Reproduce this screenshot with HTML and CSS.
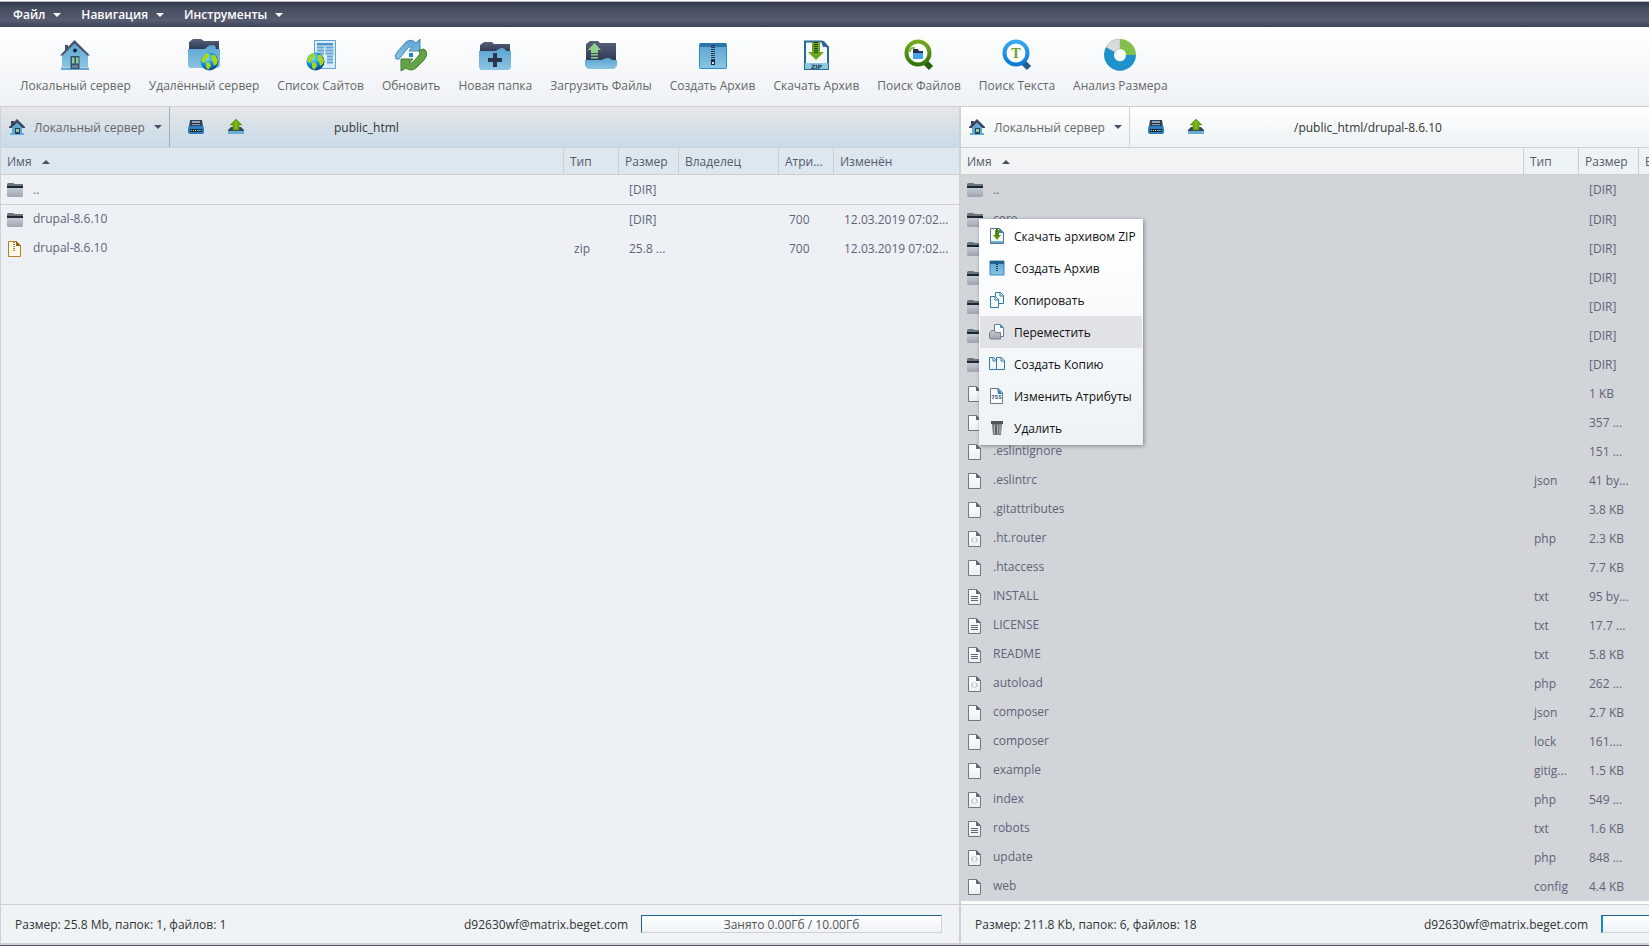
FILE: index.html
```
<!DOCTYPE html>
<html lang="ru">
  <head>
    <meta charset="UTF-8" />
    <meta name="viewport" content="width=device-width, initial-scale=1.0" />
    <title>Файловый менеджер</title>
    <link rel="stylesheet" href="styles.css">
  </head>
  <body>
    <svg class="sprite" aria-hidden="true">
      <defs>
        <linearGradient id="blue" x1="0" y1="0" x2="0" y2="1"><stop offset="0" stop-color="#5aa3d2" /><stop offset="1" stop-color="#8cc5e2" /></linearGradient>
        <linearGradient id="dark" x1="0" y1="0" x2="0" y2="1"><stop offset="0" stop-color="#59617a" /><stop offset="1" stop-color="#2b3650" /></linearGradient>
        <linearGradient id="grey" x1="0" y1="0" x2="0" y2="1"><stop offset="0" stop-color="#c6cad3" /><stop offset="1" stop-color="#9ea5b1" /></linearGradient>
        <linearGradient id="page" x1="0" y1="0" x2="0" y2="1"><stop offset="0" stop-color="#ffffff" /><stop offset="1" stop-color="#eceef2" /></linearGradient>
        <linearGradient id="green" x1="0" y1="0" x2="0" y2="1"><stop offset="0" stop-color="#77a81f" /><stop offset="1" stop-color="#337507" /></linearGradient>
        <linearGradient id="lens" x1="0" y1="0" x2="0" y2="1"><stop offset="0" stop-color="#36a9ef" /><stop offset="1" stop-color="#0b7bd6" /></linearGradient>
        <radialGradient id="sea" cx="0.35" cy="0.3" r="0.8"><stop offset="0" stop-color="#8be6ff" /><stop offset="0.45" stop-color="#1598e6" /><stop offset="1" stop-color="#04327e" /></radialGradient>
      </defs>

      <symbol id="globe" viewBox="0 0 19 19">
        <circle cx="9.500" cy="9.500" r="9" fill="url(#sea)" />
        <path d="M2 6q2-4 6-5l2 2-2 1 1 2-3 1-1 3-2 1-2-2zM6 10l4 1 1 3-3 4-2-3zM12 3l3 0 3 5-1 4-3 2-1-4-2-2 1-2-1-2z" fill="#a6d61a" />
      </symbol>
      <symbol id="house" viewBox="0 0 32 32">
        <path d="M6 6h3v7H6z" fill="#465069" />
        <path d="M16 3 29 16v12H3V16z" fill="url(#blue)" />
        <path d="M15.500 1 31 16.500H28.500L15.500 4.500 3.500 16.500H1z" fill="#465069" />
        <path d="M2 28.500h28V31H2z" fill="#64a8d2" />
        <circle cx="16" cy="11.500" r="2" fill="#17213a" />
        <path d="M11.500 17h9v13h-9z" fill="#35526e" />
        <path d="M13 18.500h2.500v6H13zM17 18.500h2.500v6H17z" fill="#8bce8d" />
        <path d="M13 26h6v3h-6z" fill="#6b8298" />
      </symbol>
      <symbol id="house-sm" viewBox="0 0 16 16">
        <path d="M2 2h3v5H2zM8 0l8 8v1h-3L8 4 3 9H0V8z" fill="#3d465e" />
        <path d="M8 4l5 5v6H3V9z" fill="#58a9d4" />
        <path d="M1 14h14v2H1z" fill="#66acd4" />
        <path d="M6 9h5v6H6z" fill="#21455e" /><path d="M7 10h3v3H7z" fill="#9ecd9b" />
      </symbol>
      <symbol id="remote" viewBox="0 0 32 32">
        <path d="M1 10V3l4-3h8l3 2h15v9z" fill="url(#dark)" />
        <path d="M0 10h17q3-4 7-4t4 4h4v17l-2 2H2l-2-2z" fill="url(#blue)" />
        <use href="#globe" x="12" y="13" width="19" height="19" />
      </symbol>
      <symbol id="sites" viewBox="0 0 32 32">
        <path d="M9.500 1.500h21v28h-21z" fill="#d9edf8" stroke="#62a4cf" />
        <path d="M12 4h16v2.500H12z" fill="#4c96c8" />
        <path d="M12 8.500h7M12 11.500h7M12 14.500h7M20.500 8.500h8M20.500 11.500h8M20.500 14.500h8M22 17.500h6M22 20.500h6M22 23.500h6" stroke="#62a4cf" stroke-width="2" />
        <use href="#globe" x="1" y="13" width="19" height="19" />
      </symbol>
      <symbol id="refresh" viewBox="0 0 32 32">
        <path d="M1 20Q-1 16 3 12L11 3Q16-1 21 4l4-4v12H14l3-4q-3-1-5 2L4 20z" fill="url(#blue)" stroke="#4389b8" />
        <path d="M29 10l2 2q2 5-2 9l-8 8q-5 4-10 0l-5 3V20h12l-4 4q2 1 5-2l6-7-1-4z" fill="#63a348" stroke="#417e31" />
        <path d="M14 14h4v4h-4z" fill="#1584c9" />
      </symbol>
      <symbol id="new-folder" viewBox="0 0 32 32">
        <path d="M1 12V6l4-3h8l2 2h16v8z" fill="url(#dark)" />
        <path d="M0 12h17q3-3 6-3t4 3h5v17l-2 2H2l-2-2z" fill="url(#blue)" />
        <path d="M14 14h4v5h5v4h-5v5h-4v-5H9v-4h5z" fill="#2a344b" />
      </symbol>
      <symbol id="upload" viewBox="0 0 32 32">
        <path d="M1 24V5l4-3h8l2 2h16v20z" fill="url(#dark)" />
        <path d="M0 21h17q3-2 6-2t4 2h5v6l-3 3H3l-3-3z" fill="url(#blue)" />
        <path d="M9.500 4 16 11h-3v3H6v-3H3zM6 15h7v1.500H6zM6 18h7v1.500H6z" fill="#8fd08a" />
      </symbol>
      <symbol id="archive" viewBox="0 0 32 32">
        <rect x="2.500" y="4.500" width="27" height="25" rx="1" fill="url(#blue)" stroke="#2b8cc4" />
        <path d="M3 4h26v4H3z" fill="#2a74aa" />
        <path d="M16 6v17" stroke="#27394e" stroke-width="4" stroke-dasharray="1 1" />
        <path d="M14 21h4v5h-4z" fill="#1d2b3d" /><path d="M15 23h2v2h-2z" fill="#d4e6f0" />
      </symbol>
      <symbol id="zip-down" viewBox="0 0 32 32">
        <path d="M5 2.500h17l6 6V30H5z" fill="#f3f8fc" stroke="#2d6b96" stroke-width="2" />
        <path d="M21 2h3l5 6h-6z" fill="#2d6b96" />
        <path d="M5 24h23v6H5z" fill="#8dc6e2" />
        <path d="M12 3h8v10h4l-8 8-8-8h4z" fill="#6fa51a" />
        <path d="M16 3v11" stroke="#284316" stroke-width="4" stroke-dasharray="1 1" />
        <text x="16.500" y="30" text-anchor="middle" class="ic-zip">ZIP</text>
      </symbol>
      <symbol id="find-file" viewBox="0 0 32 32">
        <path d="M21 22l7 7" stroke="#2c6109" stroke-width="6" />
        <circle cx="15" cy="14" r="11.500" fill="#fff" stroke="url(#green)" stroke-width="4" />
        <path d="M10 10h5l1 2h4v3H10z" fill="#26314b" /><path d="M10 14h10v6H10z" fill="#42a5ea" />
        <path d="M7 13q0-5 5-4" fill="none" stroke="#8cb84a" stroke-width="2" />
      </symbol>
      <symbol id="find-text" viewBox="0 0 32 32">
        <path d="M21 22l7 7" stroke="#235d8c" stroke-width="6" />
        <circle cx="15" cy="14" r="11.500" fill="#fff" stroke="url(#lens)" stroke-width="4" />
        <text x="15" y="19" text-anchor="middle" class="ic-t">T</text>
      </symbol>
      <symbol id="sizes" viewBox="0 0 32 32">
        <path d="M16 0a16 16 0 0 1 16 16H22a6 6 0 0 0-6-6z" fill="#83c04b" />
        <path d="M32 16A16 16 0 1 1 2 8l9 5a6 6 0 1 0 11 3z" fill="#1e93cb" />
        <path d="M2 8Q6 0 16 0v10q-4 0-5 3z" fill="#d9dbde" stroke="#9ca4aa" stroke-width="0.500" />
      </symbol>
      <symbol id="drive" viewBox="0 0 16 16">
        <path d="M2 1h12l1 7H1z" fill="#2b4058" /><path d="M4 2h8v4H4z" fill="#8fa5b5" /><path d="M4 4h8v1H4z" fill="#1c2a3b" />
        <rect y="7" width="16" height="8" rx="2" fill="#2b7dbd" /><path d="M2 10h12v3H2z" fill="#16273b" />
        <path d="M3 11h1v1H3zM5 11h1v1H5zM7 11h1v1H7z" fill="#e9e05a" /><path d="M9 11h4v1H9z" fill="#59b4e5" />
      </symbol>
      <symbol id="up" viewBox="0 0 16 16">
        <path d="M0 11l3-3h10l3 3v1H0z" fill="#36475c" /><path d="M0 12h16v3H0z" fill="#65aed6" />
        <path d="M8 0l6 6h-3v5H5V6H2z" fill="#6aa80b" stroke="#4e850c" stroke-width="0.500" /><path d="M8 2v8" stroke="#a0ce33" />
      </symbol>
      <symbol id="folder" viewBox="0 0 16 16">
        <path d="M0 5V2l1-1h5l2 1h8v3z" fill="#6b757d" />
        <path d="M0 4h16v2H0z" fill="#1b2635" /><path d="M0 6h16v8l-1 1H1l-1-1z" fill="url(#grey)" />
      </symbol>
      <symbol id="file" viewBox="0 0 16 16">
        <path d="M1.500 0.500h8l4 4v11h-12z" fill="url(#page)" stroke="#6d7984" /><path d="M9 0l5 5H9z" fill="#5f6b76" />
      </symbol>
      <symbol id="code" viewBox="0 0 16 16">
        <use href="#file" /><path d="M6.500 6.500 4.500 9l2 2.500M8.500 6.500l2 2.500-2 2.500" fill="none" stroke="#a3abb9" />
      </symbol>
      <symbol id="text" viewBox="0 0 16 16">
        <use href="#file" /><path d="M4 7.500h7M4 9.500h7M4 11.500h7" stroke="#5f6873" />
      </symbol>
      <symbol id="zip" viewBox="0 0 16 16">
        <path d="M1.500 0.500h8l4 4v11h-12z" fill="#fdf8ec" stroke="#b9811c" /><path d="M9 0l5 5H9z" fill="#9a6508" />
        <path d="M7 1v10" stroke="#b9811c" stroke-width="2" stroke-dasharray="1 1" />
      </symbol>
      <symbol id="menu-zip" viewBox="0 0 16 16">
        <path d="M1.500 0.500h9l4 4v11h-13z" fill="#f7fafc" stroke="#5d7083" /><path d="M10 0l5 5h-5z" fill="#3b84b3" />
        <path d="M2 13h12v2H2z" fill="#6db1d7" /><path d="M6 2h4v5h2l-4 5-4-5h2z" fill="#65970d" /><path d="M8 1v7" stroke="#345e15" stroke-width="2" stroke-dasharray="1 1" />
      </symbol>
      <symbol id="menu-archive" viewBox="0 0 16 16">
        <path d="M1 1h14v14H1z" fill="url(#blue)" stroke="#3688b9" /><path d="M1 1h14v3H1z" fill="#21658f" />
        <path d="M8 2v10" stroke="#243d54" stroke-width="2" stroke-dasharray="1 1" />
      </symbol>
      <symbol id="menu-copy" viewBox="0 0 16 16">
        <path d="M6.500 0.500h5l3 3v8h-8z" fill="#f1f8fc" stroke="#347ba5" /><path d="M1.500 4.500h5l3 3v8h-8z" fill="#f5fafd" stroke="#347ba5" />
        <path d="M11 0v4h4M6 4v4h4" fill="none" stroke="#347ba5" />
      </symbol>
      <symbol id="menu-move" viewBox="0 0 16 16">
        <path d="M5.500 0.500h6l3 3v9h-9z" fill="#fafbfd" stroke="#6d7984" /><path d="M11 0l4 4h-4z" fill="#3b98d3" />
        <path d="M0.500 14V9l2-2.500h3l1 2h5V15h-10z" fill="url(#grey)" stroke="#777f8b" />
      </symbol>
      <symbol id="menu-clone" viewBox="0 0 16 16">
        <path d="M0.500 1.500h4l3 3v9h-7zM7.500 1.500h5l3 3v9h-8z" fill="#f1f8fc" stroke="#347ba5" /><path d="M4 2v3h3M12 2v3h3" fill="none" stroke="#347ba5" />
      </symbol>
      <symbol id="menu-attr" viewBox="0 0 16 16">
        <path d="M1.500 0.500h8l4 4v11h-12z" fill="#fbfcfe" stroke="#6d7984" /><path d="M8 0l6 6H9z" fill="#3384b3" />
        <text x="7.500" y="11" text-anchor="middle" class="ic-attr">755</text>
      </symbol>
      <symbol id="menu-trash" viewBox="0 0 16 16">
        <path d="M3 4h10l-1 11H4z" fill="#777a7e" /><path d="M2 1h12v3H2z" fill="#50555b" />
        <path d="M5.500 5v9M8.500 5v9M11 5v9" stroke="#b2b4b7" /><path d="M7 5v9" stroke="#3e4247" />
      </symbol>
    </svg>

    <nav class="menubar">
      <button>Файл <i class="caret"></i></button>
      <button>Навигация <i class="caret"></i></button>
      <button>Инструменты <i class="caret"></i></button>
    </nav>

    <header class="toolbar">
      <button><svg><use href="#house" /></svg>Локальный сервер</button>
      <button><svg><use href="#remote" /></svg>Удалённый сервер</button>
      <button><svg><use href="#sites" /></svg>Список Сайтов</button>
      <button><svg><use href="#refresh" /></svg>Обновить</button>
      <button><svg><use href="#new-folder" /></svg>Новая папка</button>
      <button><svg><use href="#upload" /></svg>Загрузить Файлы</button>
      <button><svg><use href="#archive" /></svg>Создать Архив</button>
      <button><svg><use href="#zip-down" /></svg>Скачать Архив</button>
      <button><svg><use href="#find-file" /></svg>Поиск Файлов</button>
      <button><svg><use href="#find-text" /></svg>Поиск Текста</button>
      <button><svg><use href="#sizes" /></svg>Анализ Размера</button>
    </header>

    <main>
      <section class="pane active">
        <div class="pane-bar">
          <button class="server"><svg class="ic"><use href="#house-sm" /></svg>Локальный сервер <i class="caret"></i></button>
          <button class="tool" aria-label="Диск"><svg class="ic"><use href="#drive" /></svg></button>
          <button class="tool" aria-label="Вверх"><svg class="ic"><use href="#up" /></svg></button>
          <span class="path">public_html</span>
        </div>
        <div class="list">
          <table>
            <colgroup><col><col class="c-type"><col class="c-size"><col class="c-owner"><col class="c-attr"><col class="c-date"></colgroup>
            <thead>
              <tr><th>Имя <i class="caret asc"></i></th><th>Тип</th><th>Размер</th><th>Владелец</th><th>Атри...</th><th>Изменён</th></tr>
            </thead>
            <tbody>
              <tr class="parent"><td><svg class="ic"><use href="#folder" /></svg>..</td><td></td><td>[DIR]</td><td></td><td></td><td></td></tr>
              <tr><td><svg class="ic"><use href="#folder" /></svg>drupal-8.6.10</td><td></td><td>[DIR]</td><td></td><td>700</td><td>12.03.2019 07:02...</td></tr>
              <tr><td><svg class="ic"><use href="#zip" /></svg>drupal-8.6.10</td><td>zip</td><td>25.8 ...</td><td></td><td>700</td><td>12.03.2019 07:02...</td></tr>
            </tbody>
          </table>
        </div>
        <footer>
          <span>Размер: 25.8 Mb, папок: 1, файлов: 1</span>
          <span class="account">d92630wf@matrix.beget.com</span>
          <div class="quota">Занято 0.00Гб / 10.00Гб</div>
        </footer>
      </section>

      <section class="pane">
        <div class="pane-bar">
          <button class="server"><svg class="ic"><use href="#house-sm" /></svg>Локальный сервер <i class="caret"></i></button>
          <button class="tool" aria-label="Диск"><svg class="ic"><use href="#drive" /></svg></button>
          <button class="tool" aria-label="Вверх"><svg class="ic"><use href="#up" /></svg></button>
          <span class="path">/public_html/drupal-8.6.10</span>
        </div>
        <div class="list">
          <table class="selected">
            <colgroup><col><col class="c-type"><col class="c-size"><col class="c-owner"><col class="c-attr"><col class="c-date"></colgroup>
            <thead>
              <tr><th>Имя <i class="caret asc"></i></th><th>Тип</th><th>Размер</th><th>Владелец</th><th>Атри...</th><th>Изменён</th></tr>
            </thead>
            <tbody>
              <tr><td><svg class="ic"><use href="#folder" /></svg>..</td><td></td><td>[DIR]</td><td colspan="3"></td></tr>
              <tr><td><svg class="ic"><use href="#folder" /></svg>core</td><td></td><td>[DIR]</td><td colspan="3"></td></tr>
              <tr><td><svg class="ic"><use href="#folder" /></svg>modules</td><td></td><td>[DIR]</td><td colspan="3"></td></tr>
              <tr><td><svg class="ic"><use href="#folder" /></svg>profiles</td><td></td><td>[DIR]</td><td colspan="3"></td></tr>
              <tr><td><svg class="ic"><use href="#folder" /></svg>sites</td><td></td><td>[DIR]</td><td colspan="3"></td></tr>
              <tr><td><svg class="ic"><use href="#folder" /></svg>themes</td><td></td><td>[DIR]</td><td colspan="3"></td></tr>
              <tr><td><svg class="ic"><use href="#folder" /></svg>vendor</td><td></td><td>[DIR]</td><td colspan="3"></td></tr>
              <tr><td><svg class="ic"><use href="#file" /></svg>.csslintrc</td><td></td><td>1 KB</td><td colspan="3"></td></tr>
              <tr><td><svg class="ic"><use href="#file" /></svg>.editorconfig</td><td></td><td>357 ...</td><td colspan="3"></td></tr>
              <tr><td><svg class="ic"><use href="#file" /></svg>.eslintignore</td><td></td><td>151 ...</td><td colspan="3"></td></tr>
              <tr><td><svg class="ic"><use href="#file" /></svg>.eslintrc</td><td>json</td><td>41 by...</td><td colspan="3"></td></tr>
              <tr><td><svg class="ic"><use href="#file" /></svg>.gitattributes</td><td></td><td>3.8 KB</td><td colspan="3"></td></tr>
              <tr><td><svg class="ic"><use href="#code" /></svg>.ht.router</td><td>php</td><td>2.3 KB</td><td colspan="3"></td></tr>
              <tr><td><svg class="ic"><use href="#file" /></svg>.htaccess</td><td></td><td>7.7 KB</td><td colspan="3"></td></tr>
              <tr><td><svg class="ic"><use href="#text" /></svg>INSTALL</td><td>txt</td><td>95 by...</td><td colspan="3"></td></tr>
              <tr><td><svg class="ic"><use href="#text" /></svg>LICENSE</td><td>txt</td><td>17.7 ...</td><td colspan="3"></td></tr>
              <tr><td><svg class="ic"><use href="#text" /></svg>README</td><td>txt</td><td>5.8 KB</td><td colspan="3"></td></tr>
              <tr><td><svg class="ic"><use href="#code" /></svg>autoload</td><td>php</td><td>262 ...</td><td colspan="3"></td></tr>
              <tr><td><svg class="ic"><use href="#file" /></svg>composer</td><td>json</td><td>2.7 KB</td><td colspan="3"></td></tr>
              <tr><td><svg class="ic"><use href="#file" /></svg>composer</td><td>lock</td><td>161....</td><td colspan="3"></td></tr>
              <tr><td><svg class="ic"><use href="#file" /></svg>example</td><td>gitig...</td><td>1.5 KB</td><td colspan="3"></td></tr>
              <tr><td><svg class="ic"><use href="#code" /></svg>index</td><td>php</td><td>549 ...</td><td colspan="3"></td></tr>
              <tr><td><svg class="ic"><use href="#text" /></svg>robots</td><td>txt</td><td>1.6 KB</td><td colspan="3"></td></tr>
              <tr><td><svg class="ic"><use href="#code" /></svg>update</td><td>php</td><td>848 ...</td><td colspan="3"></td></tr>
              <tr><td><svg class="ic"><use href="#file" /></svg>web</td><td>config</td><td>4.4 KB</td><td colspan="3"></td></tr>
            </tbody>
          </table>
        </div>
        <footer>
          <span>Размер: 211.8 Kb, папок: 6, файлов: 18</span>
          <span class="account">d92630wf@matrix.beget.com</span>
          <div class="quota used"></div>
        </footer>

        <div class="context-menu">
          <button><svg class="ic"><use href="#menu-zip" /></svg>Скачать архивом ZIP</button>
          <button><svg class="ic"><use href="#menu-archive" /></svg>Создать Архив</button>
          <button><svg class="ic"><use href="#menu-copy" /></svg>Копировать</button>
          <button class="current"><svg class="ic"><use href="#menu-move" /></svg>Переместить</button>
          <button><svg class="ic"><use href="#menu-clone" /></svg>Создать Копию</button>
          <button><svg class="ic"><use href="#menu-attr" /></svg>Изменить Атрибуты</button>
          <button><svg class="ic"><use href="#menu-trash" /></svg>Удалить</button>
        </div>
      </section>
    </main>
  </body>
</html>
```
FILE: styles.css
```
* {
  margin: 0;
  padding: 0;
  box-sizing: border-box;
}

body {
  display: flex;
  flex-direction: column;
  height: 100vh;
  overflow: hidden;
  font-family: "Open Sans", sans-serif;
  font-size: 12px;
  color: #333;
  background-color: #eff3f6;
  border-top: 1px solid #fff;
  border-bottom: 1px solid #50566b;
}

button {
  font: inherit;
  color: inherit;
  background: none;
  border: none;
  cursor: pointer;
  white-space: nowrap;
}

.sprite {
  position: absolute;
  width: 0;
  height: 0;
}

.ic {
  flex: none;
  width: 16px;
  height: 16px;
}

.ic-zip {
  font: bold 6px "DejaVu Sans", sans-serif;
  fill: #1d3c52;
}
.ic-t {
  font: bold 14px "Liberation Serif", serif;
  fill: #6a9f1d;
}
.ic-attr {
  font: bold 5px "DejaVu Sans", sans-serif;
  fill: #2a5475;
}

.caret {
  display: inline-block;
  border: 4px solid transparent;
  border-top-color: currentColor;
  border-bottom: none;
}
.caret.asc {
  border-top: none;
  border-bottom: 4px solid #4a5166;
}

/* Главное меню */
.menubar {
  display: flex;
  flex: none;
  height: 26px;
  padding-left: 3px;
  border-top: 1px solid #b5b7bc;
  color: #fff;
  background: linear-gradient(#34394a, #474d61 25%, #555b70 75%, #3d4254);
}
.menubar button {
  display: flex;
  align-items: center;
  gap: 8px;
  padding: 0 10px;
  line-height: 24px;
  font-weight: 600;
}

/* Панель инструментов */
.toolbar {
  display: flex;
  flex: none;
  height: 79px;
  padding-left: 11px;
  background: linear-gradient(#fff, #eef2f5);
}
.toolbar button {
  display: flex;
  flex-direction: column;
  align-items: center;
  gap: 6px;
  padding: 12px 9px 0;
  line-height: 18px;
  color: #666;
}
.toolbar svg {
  width: 32px;
  height: 32px;
}

main {
  display: flex;
  flex: 1;
  min-height: 0;
}

.pane {
  position: relative;
  display: flex;
  flex: 1 0 960px;
  flex-direction: column;
  min-width: 0;
  border: 1px solid #cfd1d3;
  border-bottom-width: 2px;
}

.pane-bar {
  display: flex;
  flex: none;
  align-items: center;
  height: 41px;
  border-bottom: 1px solid #cfd1d3;
  background: linear-gradient(#fff, #edf2f4);
}
.active .pane-bar {
  background: linear-gradient(#e5e7e8, #c8dae8);
}
.server {
  display: flex;
  align-items: center;
  align-self: stretch;
  gap: 9px;
  width: 169px;
  padding-left: 8px;
  border-right: 1px solid #cfd1d3;
  color: #666;
}
.active .server {
  border-color: #9eafc0;
}
.server .caret {
  color: #4a5166;
}
.tool {
  width: 40px;
  height: 16px;
}
.tool:nth-of-type(2) {
  margin-left: 6px;
}
.path {
  margin-left: 78px;
}

/* Список файлов */
.list {
  flex: 1;
  min-height: 0;
  overflow: hidden;
  background-color: #fff;
}
.active .list {
  background-color: #edf1f6;
}
table {
  width: 100%;
  table-layout: fixed;
  border-collapse: separate;
  border-spacing: 0;
}
.c-type,
.c-attr {
  width: 55px;
}
.c-size {
  width: 60px;
}
.c-owner {
  width: 100px;
}
.c-date {
  width: 126px;
}
th,
td {
  text-align: left;
  white-space: nowrap;
  overflow: hidden;
}
th {
  height: 27px;
  padding-left: 6px;
  border-left: 1px solid #cfcfcf;
  border-bottom: 1px solid #cfcfcf;
  font-weight: normal;
  color: #555b6b;
  background-color: #edf3f5;
}
th:first-child {
  border-left: none;
  background-color: #f2f3f5;
}
.active th,
.active th:first-child {
  background-color: #dce7ef;
}
th .caret {
  margin: 0 0 2px 7px;
}
td {
  height: 29px;
  padding-left: 11px;
  border-bottom: 1px solid #e9ebee;
  color: #5f6377;
}
tr:first-child td {
  height: 30px;
}
td:first-child {
  padding-left: 6px;
}
td .ic {
  margin-right: 10px;
  vertical-align: middle;
}
.parent td {
  border-color: #cfd1d3;
}
.selected td {
  border-color: #d1d5da;
  background-color: #d1d5da;
}

footer {
  display: flex;
  flex: none;
  align-items: center;
  height: 39px;
  padding: 0 17px 0 14px;
  border-top: 1px solid #cfd1d3;
  background-color: #eff3f6;
}
.account {
  margin-left: auto;
}
.quota {
  width: 301px;
  height: 18px;
  margin-left: 13px;
  border: 1px solid #cfd1d3;
  border-top-color: #1e6294;
  border-left-color: #1e6294;
  line-height: 18px;
  text-align: center;
  color: #555;
  background: linear-gradient(#fff, #eff3f6);
}
.quota.used {
  border-left: 2px solid #1689cf;
}

/* Контекстное меню */
.context-menu {
  position: absolute;
  top: 112px;
  left: 18px;
  width: 164px;
  padding: 1px;
  color: #111;
  background: linear-gradient(#fff, #edf2f5);
  box-shadow: 1px 1px 4px rgba(0, 0, 0, 0.4);
}
.context-menu button {
  display: flex;
  align-items: center;
  gap: 9px;
  width: 100%;
  height: 32px;
  padding-left: 9px;
}
.context-menu .current,
.context-menu button:hover {
  background-color: #e1e2e6;
}
```
